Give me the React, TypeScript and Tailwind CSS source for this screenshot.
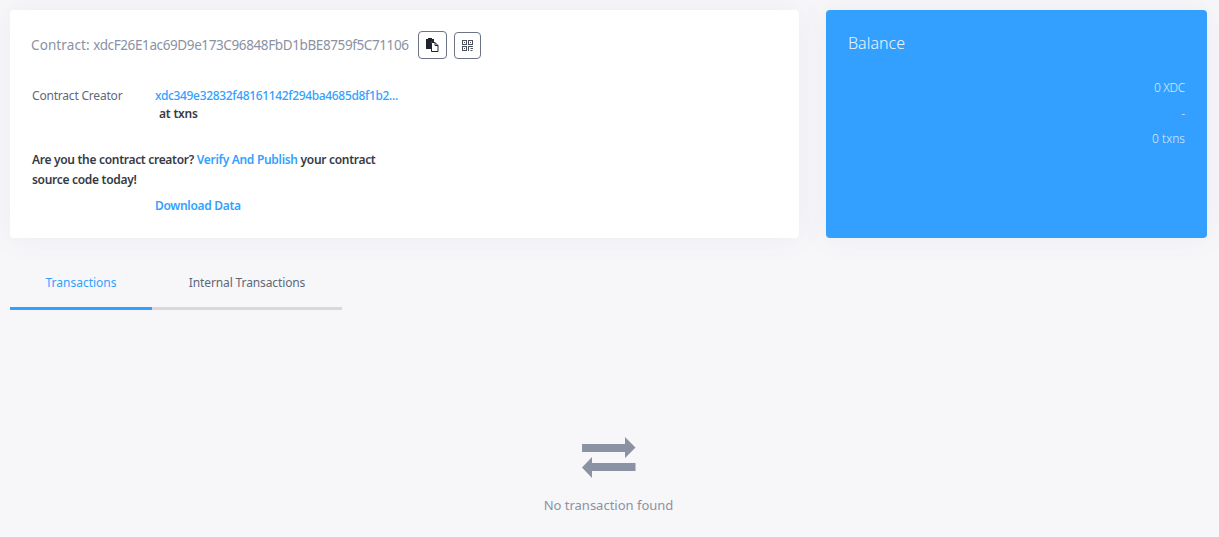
import React from "react";

function CopyIcon() {
  return (
    <svg width="13" height="14" viewBox="0 0 13 14">
      <path d="M0 1h2V0h4v1h2v3H5v7H0z" fill="#1f2430" />
      <path d="M5.500 4.500h3.500l3 3v6H5.500z" fill="#fff" stroke="#1f2430" strokeWidth="1" />
      <path d="M9 4.500v3h3" fill="none" stroke="#1f2430" strokeWidth="1" />
    </svg>
  );
}

function QrIcon() {
  return (
    <svg width="11" height="11" viewBox="0 0 11 11" fill="none" stroke="#4a505c" strokeWidth="1">
      <rect x="0.5" y="0.5" width="4" height="4" />
      <rect x="6.5" y="0.5" width="4" height="4" />
      <rect x="0.5" y="6.5" width="4" height="4" />
      <path d="M6 6.500h5M6.500 6v5M8.500 8.500h2.500M8.500 10.500h2" />
      <rect x="2" y="2" width="1" height="1" fill="#4a505c" stroke="none" />
      <rect x="8" y="2" width="1" height="1" fill="#4a505c" stroke="none" />
      <rect x="2" y="8" width="1" height="1" fill="#4a505c" stroke="none" />
    </svg>
  );
}

function SwapIcon() {
  return (
    <svg width="55" height="41" viewBox="0 0 55 41" fill="#8a92a3">
      <path d="M1 7h43V0l10.500 10.500L44 21v-6H1z" />
      <path d="M54.500 26H11v-6L1 30.500 11 41v-7h43.500z" />
    </svg>
  );
}

export default function App() {
  return (
    <div className="min-h-[537px] bg-[#f7f7fa] p-[10px] font-['Noto_Sans',sans-serif] overflow-hidden">
      <div className="flex gap-[27px] items-stretch">
        <div className="w-[789px] h-[228px] bg-white rounded shadow-[0_0_30px_rgba(100,100,130,0.07)] pt-[21px] pl-[21px]">
          <div className="flex items-center h-[28px]">
            <span className="text-[13.5px] text-[#8a92a3] w-[387px] whitespace-nowrap">
              <span className="tracking-[0.1px]">Contract:</span>{" "}
              <span className="tracking-[-0.39px]">xdcF26E1ac69D9e173C96848FbD1bBE8759f5C71106</span>
            </span>
            <button className="w-[29px] h-[28px] border border-[#6b7384] rounded flex items-center justify-center bg-white">
              <CopyIcon />
            </button>
            <button className="ml-[7px] w-[27px] h-[27px] border border-[#6b7384] rounded flex items-center justify-center bg-white">
              <QrIcon />
            </button>
          </div>
          <div className="flex mt-[28px] ml-[1px] text-[12px] leading-[18px]">
            <div className="w-[123px] text-[#5f6878] tracking-[-0.2px]">Contract Creator</div>
            <div>
              <div className="text-[#339fff] font-medium tracking-[-0.35px]">
                xdc349e32832f48161142f294ba4685d8f1b2...
              </div>
              <div className="ml-[4px] text-[#343a46] font-semibold tracking-[-0.2px]">at txns</div>
            </div>
          </div>
          <p className="mt-[27px] ml-[1px] w-[360px] text-[12px] leading-[20px] font-semibold tracking-[-0.3px] text-[#343a46]">
            Are you the contract creator? <span className="text-[#339fff]">Verify And Publish</span> your contract source code today!
          </p>
          <div className="mt-[7px] ml-[124px] text-[12px] leading-[18px] font-semibold tracking-[-0.3px] text-[#339fff]">Download Data</div>
        </div>
        <div className="w-[381px] h-[228px] bg-[#339fff] rounded shadow-[0_0_30px_rgba(100,100,130,0.07)] pt-[22px] px-[22px] text-white">
          <div className="text-[16px] leading-[22px] font-light opacity-90">Balance</div>
          <div className="mt-[21px] text-right text-[12px] font-light leading-[25.5px] opacity-80">
            <div className="tracking-[-0.3px]">0 XDC</div>
            <div>-</div>
            <div>0 txns</div>
          </div>
        </div>
      </div>

      <div className="flex w-[332px] mt-[27px] border-b-[3px] border-[#d8d8dc] text-[12px] leading-[18px]">
        <div className="w-[142px] h-[45px] pt-[9px] text-center text-[#339fff] border-b-[3px] border-[#339fff] mb-[-3px]">
          Transactions
        </div>
        <div className="w-[190px] pt-[9px] text-center text-[#5f6878] tracking-[-0.12px]">Internal Transactions</div>
      </div>

      <div className="flex flex-col items-center mt-[127px] pr-[2px]">
        <SwapIcon />
        <div className="mt-[18px] text-[13px] leading-[18px] text-[#8a92a3]">No transaction found</div>
      </div>
    </div>
  );
}
